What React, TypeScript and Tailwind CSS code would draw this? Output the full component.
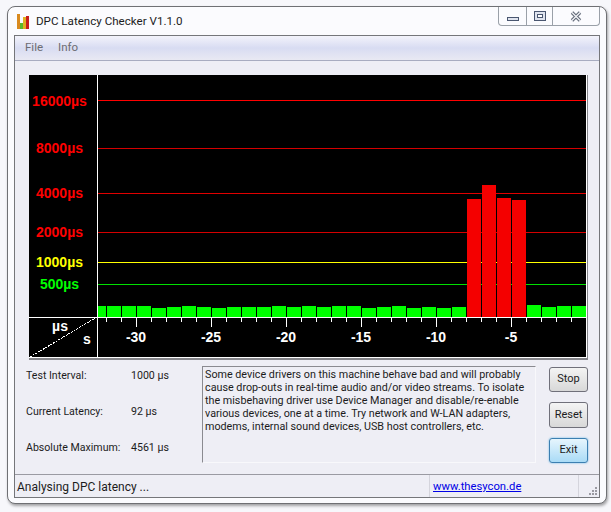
const lines = [
  { y: 25, color: "#ff0000", label: "16000µs", base: 31 },
  { y: 73, color: "#d40000", label: "8000µs", base: 78 },
  { y: 118, color: "#e00000", label: "4000µs", base: 123 },
  { y: 157, color: "#d40000", label: "2000µs", base: 162 },
  { y: 187, color: "#ffff00", label: "1000µs", base: 192 },
  { y: 209, color: "#00e000", label: "500µs", base: 214 },
];

const labelColor = (y: number) => (y < 160 ? "#ff0000" : y < 200 ? "#ffff00" : "#00ff00");

// top of each bar in page pixels, first one is cut off by the axis
const bars = [
  306, 306, 306, 306, 308, 307, 306, 307, 308, 307, 307, 307, 306, 307, 306, 307,
  306, 306, 308, 307, 306, 308, 307, 308, 307, 199, 185, 198, 200, 305, 307, 306, 306,
];

const Chart = () => {
  const ticks = Array.from({ length: 32 }, (_, i) => 77 + i * 15);
  return (
    <svg width="558" height="283" className="block flex-none bg-black">
      {lines.map((l) => (
        <g key={l.label}>
          <rect x="68" y={l.y} width="490" height="1" fill={l.color} />
          <text x="30.5" y={l.base} textAnchor="middle" fill={labelColor(l.y)} className="font-['Liberation_Sans',sans-serif] text-[14px] font-bold">
            {l.label}
          </text>
        </g>
      ))}
      {bars.map((top, i) => {
        const x = i === 0 ? 69 : 78 + (i - 1) * 15;
        const w = i === 0 ? 8 : 14;
        return <rect key={i} x={x} y={top - 75} width={w} height={317 - top} fill={top < 300 ? "#f40000" : "#00ff00"} />;
      })}
      <rect x="0" y="242" width="558" height="1" fill="#ffffff" />
      <rect x="68" y="0" width="1" height="283" fill="#ffffff" />
      {ticks.map((x, i) => (
        <rect key={x} x={x} y="243" width="1" height={(i + 3) % 5 === 0 ? 9 : 4} fill="#ffffff" />
      ))}
      {[-30, -25, -20, -15, -10, -5].map((n, i) => (
        <text key={n} x={107 + i * 75} y="267" textAnchor="middle" fill="#ffffff" className="font-['Liberation_Sans',sans-serif] text-[14px] font-bold">
          {n}
        </text>
      ))}
      <text x="31" y="256" textAnchor="middle" fill="#ffffff" className="font-['Liberation_Sans',sans-serif] text-[14px] font-bold">µs</text>
      <text x="58" y="269" textAnchor="middle" fill="#ffffff" className="font-['Liberation_Sans',sans-serif] text-[14px] font-bold">s</text>
      <line x1="1" y1="282" x2="68" y2="242" stroke="#ffffff" strokeWidth="1" strokeDasharray="2 1" shapeRendering="crispEdges" />
      <rect x="557" y="0" width="1" height="283" fill="#ffffff" />
      <rect x="0" y="282" width="558" height="1" fill="#ffffff" />
    </svg>
  );
};

const AppIcon = () => (
  <svg width="14" height="15" viewBox="0 0 14 15" className="flex-none">
    <rect x="1" y="0" width="3" height="15" fill="#d98a1f" />
    <rect x="4" y="9" width="3" height="6" fill="#5cb82c" />
    <rect x="7" y="3" width="3" height="12" fill="#e0b020" />
    <rect x="10" y="2" width="3" height="13" fill="#c81e1e" />
  </svg>
);

const CaptionButtons = () => (
  <div className="flex h-[19px] flex-none rounded-b-[4px] border border-t-0 border-[#9aa0a8]">
    <div className="flex w-[28px] items-end justify-center border-r border-[#9aa0a8] pb-[4px]">
      <svg width="12" height="4"><rect x="0.5" y="0.5" width="11" height="3" fill="#dfe3ee" stroke="#4a5670" /></svg>
    </div>
    <div className="flex w-[26px] items-center justify-center border-r border-[#9aa0a8]">
      <svg width="12" height="10">
        <rect x="0.5" y="0.5" width="11" height="9" fill="#dfe3ee" stroke="#4a5670" />
        <rect x="3.5" y="3.5" width="5" height="3" fill="#ffffff" stroke="#4a5670" />
      </svg>
    </div>
    <div className="flex w-[46px] items-center justify-center">
      <svg width="12" height="11">
        <path d="M2 1.5 L10 9.5 M10 1.5 L2 9.5" stroke="#5a6272" strokeWidth="3.4" />
        <path d="M2 1.5 L10 9.5 M10 1.5 L2 9.5" stroke="#eceef2" strokeWidth="1.5" />
      </svg>
    </div>
  </div>
);

const Stat = ({ label, value }: { label: string; value: string }) => (
  <div className="flex h-[18px] items-center pt-[2px]">
    <div className="w-[105px]">{label}</div>
    <div>{value}</div>
  </div>
);

export default function App() {
  return (
    <div className="h-[512px] w-[611px] overflow-hidden bg-[#f7f7fb] pl-[7px] pt-[6px] font-['Roboto',sans-serif] text-[10.6px] text-[#1c1c1c]">
      <div className="flex h-[498px] w-[600px] flex-col rounded-[8px] border border-[#6f7074] bg-[#fbfbfe] px-[6px] pb-[5px] shadow-[1px_2px_3px_rgba(0,0,0,0.35)]">
        <div className="flex h-[28px] flex-none items-start justify-between">
          <div className="flex items-center gap-[6px] pl-[2px] pt-[7px]">
            <AppIcon />
            <span className="text-[11.6px] leading-[15px]">DPC Latency Checker V1.1.0</span>
          </div>
          <CaptionButtons />
        </div>

        <div className="flex min-h-0 flex-1 flex-col border border-[#75767a] bg-[#eeeef5]">
          <div className="flex h-[25px] flex-none items-center gap-[15px] border-b border-[#a8acc0] bg-gradient-to-b from-[#f3f3fb] via-[#d8dcf2] to-[#e9e9f3] pl-[10px] text-[11.5px] text-[#6c6c72]">
            <span>File</span>
            <span>Info</span>
          </div>

          <div className="flex-1 pl-[14px] pt-[14px]">
            <div className="w-[559px] border-b-2 border-r border-[#85858a]">
              <Chart />
            </div>

            <div className="mt-[6px] flex">
              <div className="ml-[-3px] flex w-[176px] flex-none flex-col gap-[18px]">
                <Stat label="Test Interval:" value="1000 µs" />
                <Stat label="Current Latency:" value="92 µs" />
                <Stat label="Absolute Maximum:" value="4561 µs" />
              </div>

              <div className="h-[97px] w-[334px] flex-none border border-b-[#f8f8fb] border-l-[#8a8a90] border-r-[#f8f8fb] border-t-[#8a8a90] pl-[2px] pt-[1px] text-[10.75px] leading-[13px]">
                Some device drivers on this machine behave bad and will probably<br />
                cause drop-outs in real-time audio and/or video streams. To isolate<br />
                the misbehaving driver use Device Manager and disable/re-enable<br />
                various devices, one at a time. Try network and W-LAN adapters,<br />
                modems, internal sound devices, USB host controllers, etc.
              </div>

              <div className="ml-[13px] mt-[1px] flex w-[39px] flex-none flex-col gap-[10px] text-[11px]">
                <button className="h-[25px] rounded-[3px] border border-[#70707a] bg-gradient-to-b from-[#f4f4f4] to-[#d8d8d8]">Stop</button>
                <button className="h-[26px] rounded-[3px] border border-[#70707a] bg-gradient-to-b from-[#f4f4f4] to-[#d8d8d8]">Reset</button>
                <button className="h-[25px] rounded-[3px] border border-[#3c7fb1] bg-gradient-to-b from-[#e6f5fd] to-[#a9dbf6] shadow-[0_0_2px_#5ab4e6]">Exit</button>
              </div>
            </div>
          </div>

          <div className="flex h-[23px] flex-none items-center border-t border-[#9a9aa2]">
            <div className="w-[414px] pl-[2px] pt-[2px] text-[12px]">Analysing DPC latency ...</div>
            <div className="flex h-full w-[150px] items-center border-l border-r border-[#d4d4dc] pl-[3px] pt-[3px] text-[11.25px]">
              <a href="#" className="text-[#0000e6] underline">www.thesycon.de</a>
            </div>
            <div className="flex h-full flex-1 items-end justify-end pb-[1px] pr-[1px]">
              <svg width="9" height="9" fill="#9a9aa2">
                <rect x="6" y="0" width="2" height="2" />
                <rect x="3" y="3" width="2" height="2" />
                <rect x="6" y="3" width="2" height="2" />
                <rect x="0" y="6" width="2" height="2" />
                <rect x="3" y="6" width="2" height="2" />
                <rect x="6" y="6" width="2" height="2" />
              </svg>
            </div>
          </div>
        </div>
      </div>
    </div>
  );
}
